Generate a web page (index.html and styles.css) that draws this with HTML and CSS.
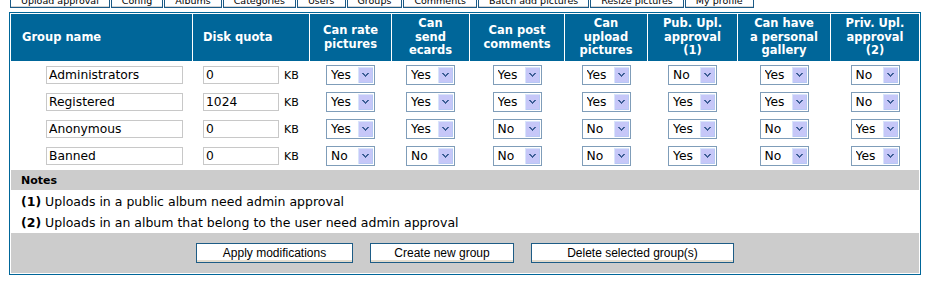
FILE: index.html
```html
<!DOCTYPE html>
<html lang="en">
<head>
    <meta charset="UTF-8">
    <title>Manage user groups</title>
    <link rel="stylesheet" href="styles.css">
</head>
<body>

<svg class="defs" width="0" height="0">
    <symbol id="chev" viewBox="0 0 7 4">
        <path d="M0 0h2v1h-2z M5 0h2v1h-2z M1 1h2v1h-2z M4 1h2v1h-2z M2 2h3v1h-3z M3 3h1v1h-1z"/>
    </symbol>
</svg>

<div class="tabs">
    <span class="tab">Upload approval</span>
    <span class="tab">Config</span>
    <span class="tab">Albums</span>
    <span class="tab">Categories</span>
    <span class="tab">Users</span>
    <span class="tab">Groups</span>
    <span class="tab">Comments</span>
    <span class="tab">Batch add pictures</span>
    <span class="tab">Resize pictures</span>
    <span class="tab">My profile</span>
</div>

<form class="groupmgr">
<table class="maintable">
    <tr class="head">
        <th class="left c-name">Group name</th>
        <th class="left c-quota">Disk quota</th>
        <th class="c-rate">Can rate<br>pictures</th>
        <th class="c-ecard">Can<br>send<br>ecards</th>
        <th class="c-comm">Can post<br>comments</th>
        <th class="c-upl">Can<br>upload<br>pictures</th>
        <th class="c-pub">Pub. Upl.<br>approval<br>(1)</th>
        <th class="c-gal">Can have<br>a personal<br>gallery</th>
        <th class="c-priv">Priv. Upl.<br>approval<br>(2)</th>
    </tr>
    <tr>
        <td class="name"><input type="text" class="txt name-in" value="Administrators"></td>
        <td class="quota"><input type="text" class="txt quota-in" value="0"><span class="unit">KB</span></td>
        <td><span class="sel"><select><option selected>Yes</option><option>No</option></select><span class="drop"><svg><use href="#chev"/></svg></span></span></td>
        <td><span class="sel"><select><option selected>Yes</option><option>No</option></select><span class="drop"><svg><use href="#chev"/></svg></span></span></td>
        <td><span class="sel"><select><option selected>Yes</option><option>No</option></select><span class="drop"><svg><use href="#chev"/></svg></span></span></td>
        <td><span class="sel"><select><option selected>Yes</option><option>No</option></select><span class="drop"><svg><use href="#chev"/></svg></span></span></td>
        <td><span class="sel"><select><option>Yes</option><option selected>No</option></select><span class="drop"><svg><use href="#chev"/></svg></span></span></td>
        <td><span class="sel"><select><option selected>Yes</option><option>No</option></select><span class="drop"><svg><use href="#chev"/></svg></span></span></td>
        <td><span class="sel"><select><option>Yes</option><option selected>No</option></select><span class="drop"><svg><use href="#chev"/></svg></span></span></td>
    </tr>
    <tr>
        <td class="name"><input type="text" class="txt name-in" value="Registered"></td>
        <td class="quota"><input type="text" class="txt quota-in" value="1024"><span class="unit">KB</span></td>
        <td><span class="sel"><select><option selected>Yes</option><option>No</option></select><span class="drop"><svg><use href="#chev"/></svg></span></span></td>
        <td><span class="sel"><select><option selected>Yes</option><option>No</option></select><span class="drop"><svg><use href="#chev"/></svg></span></span></td>
        <td><span class="sel"><select><option selected>Yes</option><option>No</option></select><span class="drop"><svg><use href="#chev"/></svg></span></span></td>
        <td><span class="sel"><select><option selected>Yes</option><option>No</option></select><span class="drop"><svg><use href="#chev"/></svg></span></span></td>
        <td><span class="sel"><select><option selected>Yes</option><option>No</option></select><span class="drop"><svg><use href="#chev"/></svg></span></span></td>
        <td><span class="sel"><select><option selected>Yes</option><option>No</option></select><span class="drop"><svg><use href="#chev"/></svg></span></span></td>
        <td><span class="sel"><select><option>Yes</option><option selected>No</option></select><span class="drop"><svg><use href="#chev"/></svg></span></span></td>
    </tr>
    <tr>
        <td class="name"><input type="text" class="txt name-in" value="Anonymous"></td>
        <td class="quota"><input type="text" class="txt quota-in" value="0"><span class="unit">KB</span></td>
        <td><span class="sel"><select><option selected>Yes</option><option>No</option></select><span class="drop"><svg><use href="#chev"/></svg></span></span></td>
        <td><span class="sel"><select><option selected>Yes</option><option>No</option></select><span class="drop"><svg><use href="#chev"/></svg></span></span></td>
        <td><span class="sel"><select><option>Yes</option><option selected>No</option></select><span class="drop"><svg><use href="#chev"/></svg></span></span></td>
        <td><span class="sel"><select><option>Yes</option><option selected>No</option></select><span class="drop"><svg><use href="#chev"/></svg></span></span></td>
        <td><span class="sel"><select><option selected>Yes</option><option>No</option></select><span class="drop"><svg><use href="#chev"/></svg></span></span></td>
        <td><span class="sel"><select><option>Yes</option><option selected>No</option></select><span class="drop"><svg><use href="#chev"/></svg></span></span></td>
        <td><span class="sel"><select><option selected>Yes</option><option>No</option></select><span class="drop"><svg><use href="#chev"/></svg></span></span></td>
    </tr>
    <tr>
        <td class="name"><input type="text" class="txt name-in" value="Banned"></td>
        <td class="quota"><input type="text" class="txt quota-in" value="0"><span class="unit">KB</span></td>
        <td><span class="sel"><select><option>Yes</option><option selected>No</option></select><span class="drop"><svg><use href="#chev"/></svg></span></span></td>
        <td><span class="sel"><select><option>Yes</option><option selected>No</option></select><span class="drop"><svg><use href="#chev"/></svg></span></span></td>
        <td><span class="sel"><select><option>Yes</option><option selected>No</option></select><span class="drop"><svg><use href="#chev"/></svg></span></span></td>
        <td><span class="sel"><select><option>Yes</option><option selected>No</option></select><span class="drop"><svg><use href="#chev"/></svg></span></span></td>
        <td><span class="sel"><select><option selected>Yes</option><option>No</option></select><span class="drop"><svg><use href="#chev"/></svg></span></span></td>
        <td><span class="sel"><select><option>Yes</option><option selected>No</option></select><span class="drop"><svg><use href="#chev"/></svg></span></span></td>
        <td><span class="sel"><select><option selected>Yes</option><option>No</option></select><span class="drop"><svg><use href="#chev"/></svg></span></span></td>
    </tr>
    <tr class="notes-head">
        <td colspan="9">Notes</td>
    </tr>
    <tr class="note">
        <td colspan="9"><b>(1)</b> Uploads in a public album need admin approval</td>
    </tr>
    <tr class="note">
        <td colspan="9"><b>(2)</b> Uploads in an album that belong to the user need admin approval</td>
    </tr>
    <tr class="foot">
        <td colspan="9">
            <div class="actions">
                <button type="button" class="button btn-apply">Apply modifications</button>
                <button type="button" class="button btn-create">Create new group</button>
                <button type="button" class="button btn-delete">Delete selected group(s)</button>
            </div>
        </td>
    </tr>
</table>
</form>

</body>
</html>
```

FILE: styles.css
```css
body {
    margin: 0;
    padding: 0 10px 0 9px;
    font-family: "DejaVu Sans", Verdana, sans-serif;
    font-size: 11px;
    color: #000;
    background: #fff;
}
.defs {
    position: absolute;
}
.tabs {
    display: flex;
    gap: 1px;
    height: 20px;
    margin: -12px 0 4px 1px;
}
.tab {
    display: flex;
    align-items: flex-end;
    padding: 0 10px 1px;
    border: 1px solid #1b5a86;
    background: #fff;
    box-shadow: inset 0 -1px 0 #d4d4d4;
    font-size: 9.5px;
    line-height: 11px;
    white-space: nowrap;
}
.maintable {
    width: 912px;
    table-layout: fixed;
    border: 1px solid #006699;
    border-spacing: 1px;
    background: #fff;
}
.maintable th,
.maintable td {
    padding: 0;
    box-sizing: border-box;
    vertical-align: middle;
}
.head th {
    height: 47px;
    background: #006699;
    color: #fff;
    font-size: 11.5px;
    font-weight: bold;
    line-height: 13.4px;
    text-align: center;
    white-space: nowrap;
}
.head th.left {
    text-align: left;
    padding-left: 11px;
}
.head th.c-quota {
    padding-left: 10px;
}
.c-name { width: 181px; }
.c-quota { width: 116px; }
.c-rate { width: 81px; }
.c-ecard { width: 77px; }
.c-comm { width: 94px; }
.c-upl { width: 82px; }
.c-pub { width: 89px; }
.c-gal { width: 92px; }
.c-priv { width: 88px; }

.maintable tr td {
    height: 26px;
    text-align: center;
}
.maintable td.name {
    text-align: left;
    padding-left: 35px;
}
.maintable td.quota {
    text-align: left;
    padding-left: 10px;
}
.txt {
    box-sizing: border-box;
    height: 18px;
    margin: 0;
    padding: 0 2px;
    border: 1px solid #c8c8c8;
    font-family: "DejaVu Sans", Verdana, sans-serif;
    font-size: 12.3px;
    color: #000;
    vertical-align: middle;
}
.name-in { width: 137px; }
.quota-in { width: 76px; }
.unit {
    margin-left: 5px;
    vertical-align: middle;
}
.sel {
    display: inline-block;
    position: relative;
    width: 49px;
    height: 20px;
    vertical-align: middle;
}
.sel select {
    appearance: none;
    -webkit-appearance: none;
    box-sizing: border-box;
    width: 100%;
    height: 100%;
    margin: 0;
    padding: 0 0 0 4px;
    border: 1px solid #7f9db9;
    border-radius: 0;
    background: #fff;
    font-family: "DejaVu Sans", Verdana, sans-serif;
    font-size: 12.3px;
    color: #000;
}
.sel .drop {
    position: absolute;
    right: 2px;
    top: 2px;
    width: 15px;
    height: 16px;
    display: flex;
    align-items: center;
    justify-content: center;
    background: #c6c7f8;
    box-shadow: inset 1px 1px 0 #d8e4fb, inset -1px -1px 0 #b7c8f4;
    pointer-events: none;
}
.sel .drop svg {
    width: 7px;
    height: 4px;
    fill: #3e5f96;
    shape-rendering: crispEdges;
}
.maintable tr.notes-head td {
    height: 20px;
    background: #cccccc;
    font-weight: bold;
    text-align: left;
    padding-left: 10px;
}
.maintable tr.note td {
    height: 20px;
    text-align: left;
    padding-left: 10px;
    font-size: 12.5px;
}
.maintable tr.foot td {
    height: 40px;
    background: #cccccc;
}
.actions {
    display: flex;
    justify-content: center;
    gap: 17px;
}
.button {
    box-sizing: border-box;
    height: 20px;
    margin: 0;
    padding: 0;
    border: 1px solid #1d5c86;
    background: #fff;
    box-shadow: inset 0 -2px 0 #e2dccf;
    font-family: "Liberation Sans", Arial, sans-serif;
    font-size: 12px;
    color: #000;
    cursor: pointer;
}
.btn-apply { width: 157px; }
.btn-create { width: 144px; }
.btn-delete { width: 203px; }
```
